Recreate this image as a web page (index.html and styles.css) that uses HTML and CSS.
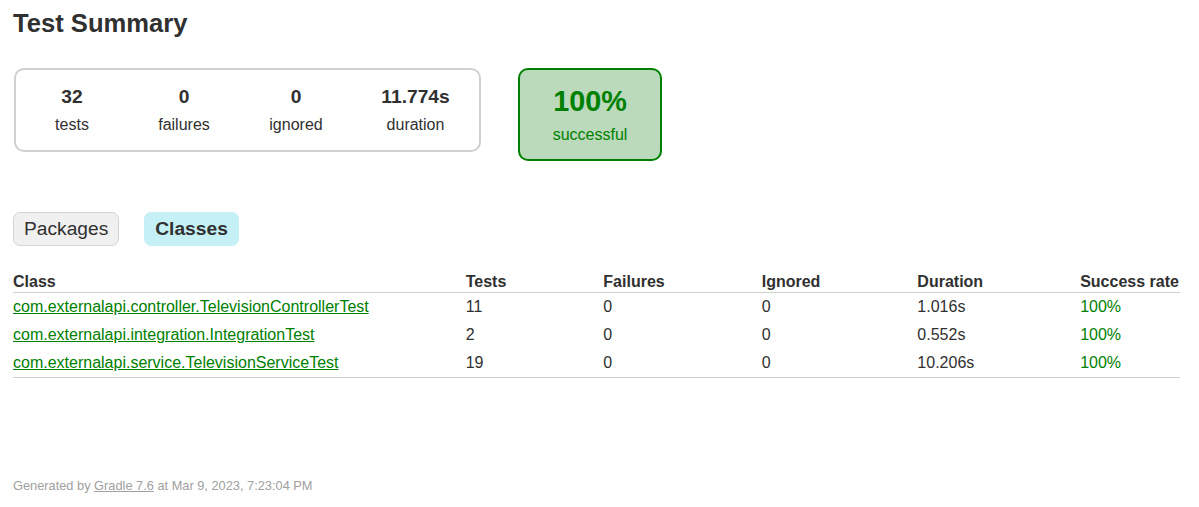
FILE: index.html
```html
<!DOCTYPE html>
<html>
<head>
<meta charset="utf-8">
<title>Test results - Test Summary</title>
<link rel="stylesheet" href="styles.css">
</head>
<body>
<div class="content">
  <h1 class="title">Test Summary</h1>
  <div class="summary">
    <div class="summary-group">
      <div class="info-box">
        <div class="counter">32</div>
        <p class="label">tests</p>
      </div>
      <div class="info-box">
        <div class="counter">0</div>
        <p class="label">failures</p>
      </div>
      <div class="info-box">
        <div class="counter">0</div>
        <p class="label">ignored</p>
      </div>
      <div class="info-box info-box-duration">
        <div class="counter">11.774s</div>
        <p class="label">duration</p>
      </div>
    </div>
    <div class="info-box success-rate">
      <div class="percent">100%</div>
      <p class="label">successful</p>
    </div>
  </div>

  <ul class="tab-links">
    <li class="tab-link"><a href="#tab0">Packages</a></li>
    <li class="tab-link selected"><a href="#tab1">Classes</a></li>
  </ul>

  <div class="tab">
    <table class="results">
      <thead>
        <tr>
          <th>Class</th>
          <th>Tests</th>
          <th>Failures</th>
          <th>Ignored</th>
          <th>Duration</th>
          <th>Success rate</th>
        </tr>
      </thead>
      <tbody>
        <tr>
          <td class="success"><a href="#">com.externalapi.controller.TelevisionControllerTest</a></td>
          <td>11</td>
          <td>0</td>
          <td>0</td>
          <td>1.016s</td>
          <td class="success">100%</td>
        </tr>
        <tr>
          <td class="success"><a href="#">com.externalapi.integration.IntegrationTest</a></td>
          <td>2</td>
          <td>0</td>
          <td>0</td>
          <td>0.552s</td>
          <td class="success">100%</td>
        </tr>
        <tr>
          <td class="success"><a href="#">com.externalapi.service.TelevisionServiceTest</a></td>
          <td>19</td>
          <td>0</td>
          <td>0</td>
          <td>10.206s</td>
          <td class="success">100%</td>
        </tr>
      </tbody>
    </table>
  </div>

  <div class="footer">Generated by <a href="#">Gradle 7.6</a> at Mar 9, 2023, 7:23:04 PM</div>
</div>
</body>
</html>
```

FILE: styles.css
```css
html, body {
  margin: 0;
  padding: 0;
}

body {
  font-family: "Liberation Sans", Arial, sans-serif;
  font-size: 16px;
  color: #303030;
  background: #ffffff;
}

a {
  color: #303030;
}

.content {
  padding: 9px 13px 30px 13px;
}

.title {
  font-size: 25.6px;
  font-weight: bold;
  margin: 0 0 10px 0;
  white-space: nowrap;
}

.summary {
  display: flex;
  align-items: flex-start;
  padding: 1px;
  margin: 29px 0 40px 0;
  width: max-content;
}

.summary-group {
  display: flex;
  padding: 1px 0;
  border: solid 2px #d0d0d0;
  border-radius: 10px;
}

.info-box {
  width: 110px;
  padding: 15px 0;
  margin: 0 1px;
  text-align: center;
}

.info-box-duration {
  width: 125px;
}

.label {
  margin: 0;
}

.counter, .percent {
  font-size: 19.2px;
  font-weight: bold;
  margin-bottom: 8px;
}

.success-rate {
  width: 140px;
  margin: 0 0 0 37px;
  border: solid 2px #008000;
  border-radius: 10px;
  background-color: #bbd9bb;
  color: #008000;
}

.success-rate .percent {
  font-size: 28.8px;
}

.tab-links {
  display: flex;
  list-style: none;
  margin: 0 0 16px 0;
  padding: 10px 0;
}

.tab-link {
  padding: 5px 10px;
  margin-right: 25px;
  border: solid 1px #d4d4d4;
  border-radius: 7px;
  background-color: #f0f0f0;
}

.tab-link a {
  font-size: 19.2px;
  display: block;
  text-decoration: none;
  color: #303030;
}

.tab-link.selected {
  background-color: #c5f0f5;
  border-color: #c5f0f5;
}

.tab-link.selected a {
  font-weight: bold;
}

.results {
  border-collapse: collapse;
  border-bottom: solid #d0d0d0 1px;
}

.results th {
  text-align: left;
  white-space: nowrap;
  padding: 1px 1px 1px 96px;
  border-bottom: solid #d0d0d0 1px;
}

.results td {
  white-space: nowrap;
  padding: 5px 1px 5px 96px;
}

.results th:first-child,
.results td:first-child {
  padding-left: 0;
}

.success, .success a {
  color: #008000;
}

.footer {
  margin-top: 100px;
  font-size: 12.8px;
  white-space: nowrap;
  color: #a0a0a0;
}

.footer a {
  color: #a0a0a0;
}
```
